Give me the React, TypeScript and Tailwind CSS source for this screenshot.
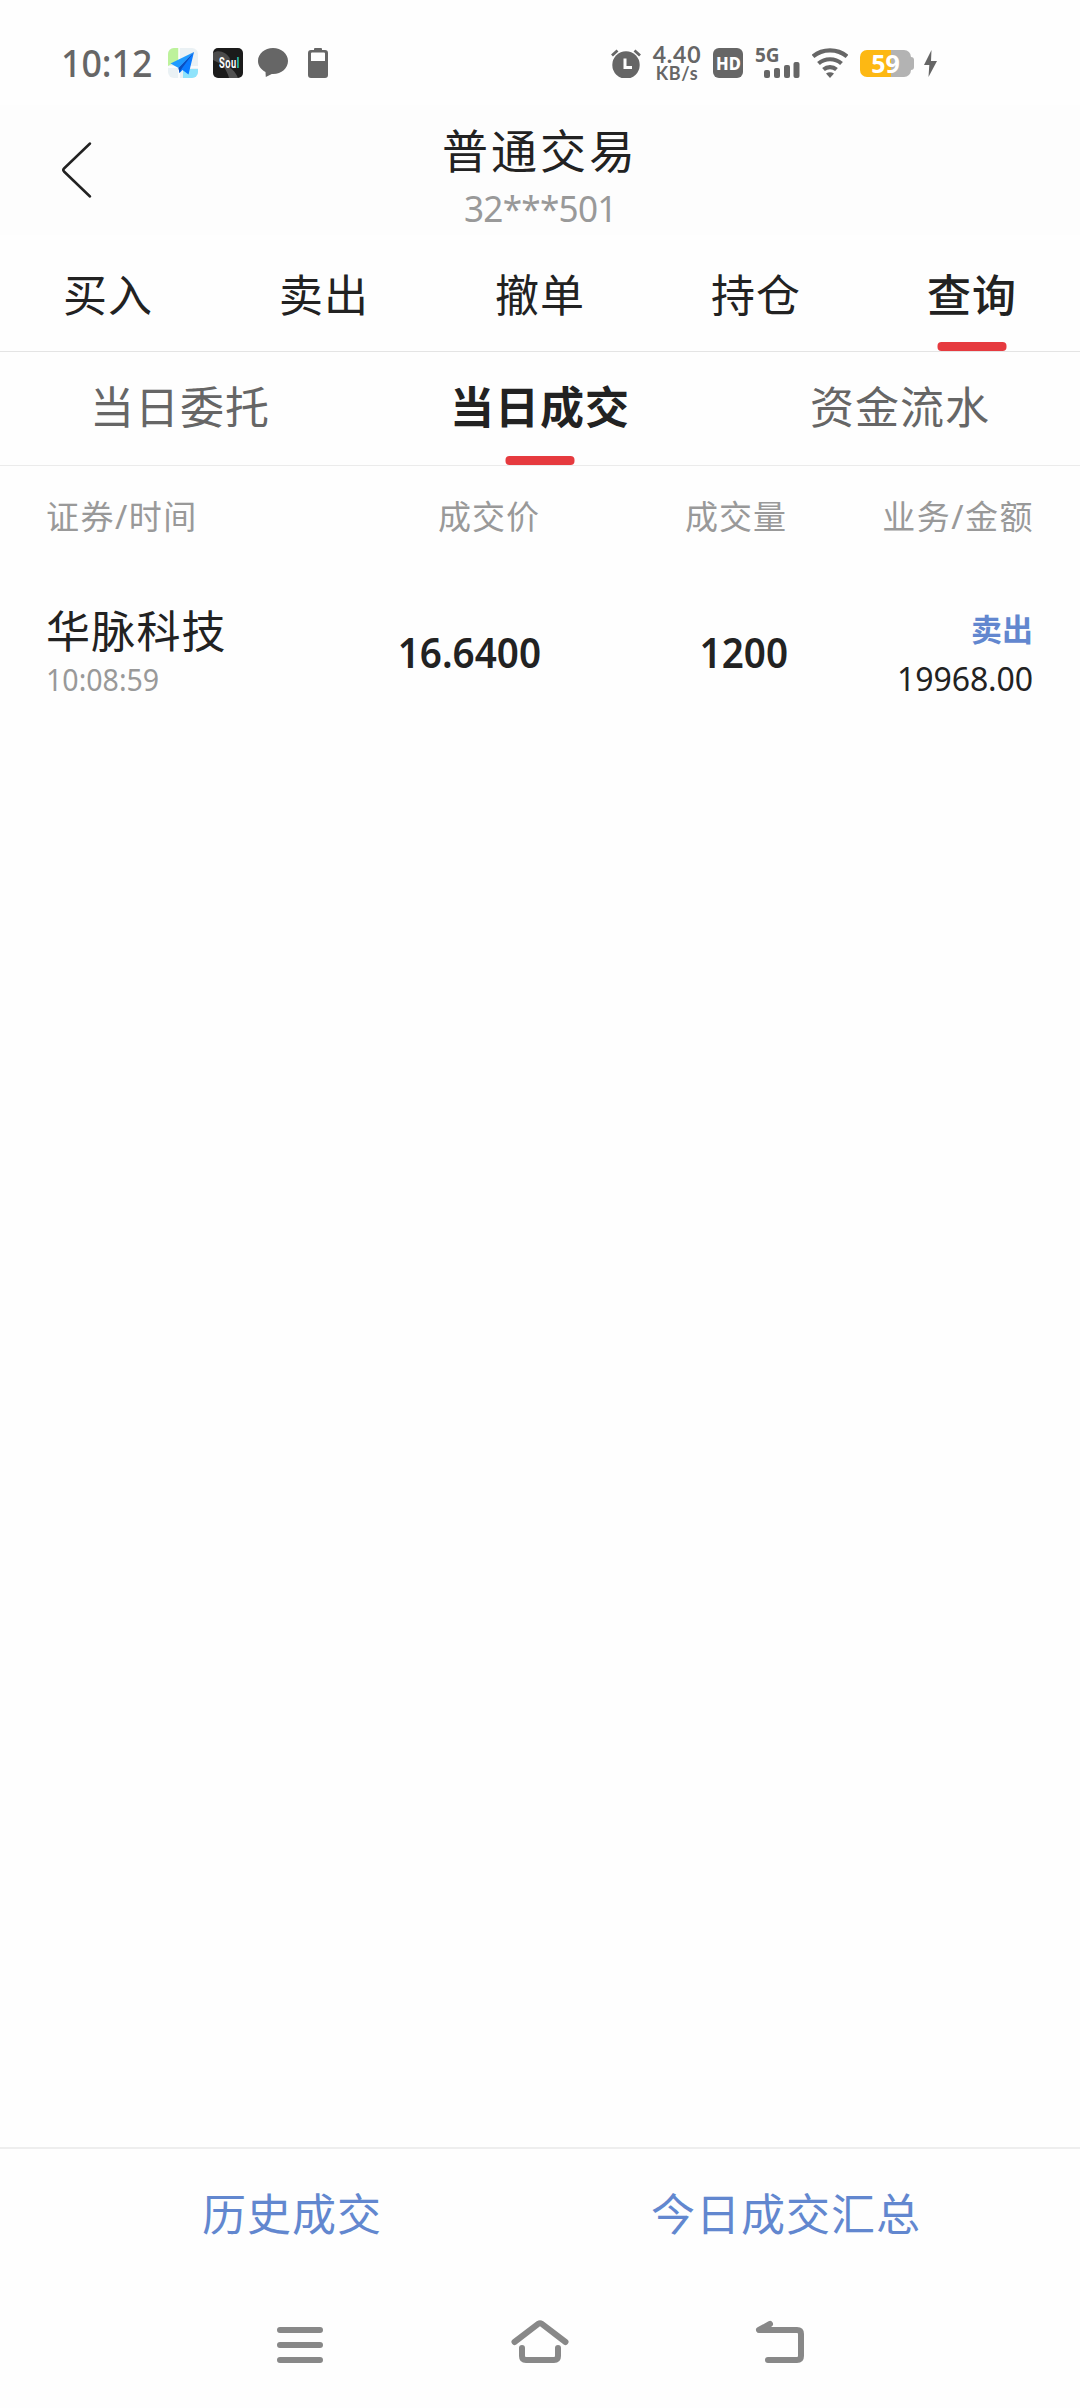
import React from 'react';

interface TabItem {
  label: string;
  active?: boolean;
  className?: string;
}

interface Trade {
  name: string;
  time: string;
  price: string;
  volume: string;
  side: string;
  amount: string;
}

const mainTabs: TabItem[] = [
  { label: '买入' },
  { label: '卖出' },
  { label: '撤单' },
  { label: '持仓' },
  { label: '查询', active: true },
];

const subTabs: TabItem[] = [
  { label: '当日委托' },
  { label: '当日成交', active: true },
  { label: '资金流水' },
];

const trades: Trade[] = [
  {
    name: '华脉科技',
    time: '10:08:59',
    price: '16.6400',
    volume: '1200',
    side: '卖出',
    amount: '19968.00',
  },
];

const MapAppIcon: React.FC = () => (
  <svg className="h-[30px] w-[30px]" viewBox="0 0 30 30">
    <defs>
      <clipPath id="map-clip">
        <rect width="30" height="30" rx="6" />
      </clipPath>
    </defs>
    <g clipPath="url(#map-clip)">
      <rect width="30" height="30" fill="#eaf1f4" />
      <path d="M0 0h11v12L0 18z" fill="#bdf29b" />
      <path d="M15 21h15v9H15z" fill="#8fe3fb" />
      <path d="M11 0v30M0 19h30" stroke="#fff" strokeWidth="1.5" />
    </g>
    <path d="M26 4L2.500 15.500l8 4.500z" fill="#1e9bff" />
    <path d="M26 4L10.500 20l1 5 3-3 6 4.500z" fill="#0a7bff" />
    <path d="M26 4L10.500 20l1 5 2-4z" fill="#0a4fc0" />
  </svg>
);

const SoulAppIcon: React.FC = () => (
  <div className="relative h-[30px] w-[30px] overflow-hidden rounded-[5px] bg-[#1b1b1b]">
    <svg className="h-[30px] w-[30px]" viewBox="0 0 30 30">
      <path d="M0 5c5-4 14-1 17 6l-5 7L0 12z" fill="#4b4b4b" />
      <path d="M11 19c6-1 11 4 14 11H16c-1-4-3-8-5-11z" fill="#505050" />
    </svg>
    <span className="absolute left-[5.500px] top-[7px] origin-left scale-x-[0.62] font-['Roboto',sans-serif] text-[15px] leading-4 font-bold tracking-[0.8px] text-white">
      Sou<span className="text-[#2fd6c4]">l</span>
    </span>
  </div>
);

const StatusBar: React.FC = () => (
  <div className="flex h-[105px] items-start pt-[45px] pl-[61px] text-[#666]">
    <div className="flex h-9 w-[107px] items-center text-[38px] leading-9 font-medium">
      <span className="mt-[-2px] origin-left scale-x-[0.940]">10:12</span>
    </div>
    <div className="flex h-9 items-center gap-[15px]">
      <MapAppIcon />
      <SoulAppIcon />
      <svg className="h-[30px] w-[30px]" viewBox="0 0 30 30" fill="#666">
        <path d="M15 0C6.700 0 0 5.700 0 13c0 4.500 2.700 8.500 7.500 11l.3 5 6-3.100c9 .7 16.200-5.400 16.200-12.900C30 5.700 23.300 0 15 0z" />
      </svg>
      <svg className="ml-[5px] h-[30px] w-5" viewBox="0 0 20 30" fill="#666">
        <path
          fillRule="evenodd"
          d="M6 2V1q0-1 1-1h6q1 0 1 1v1h3q3 0 3 3v22q0 3-3 3H3q-3 0-3-3V5q0-3 3-3zM4 4.500q-1 0-1 1v7.500h14V5.500q0-1-1-1z"
        />
      </svg>
    </div>

    <div className="ml-[283px] flex h-9 items-center">
      <svg className="h-[30px] w-[30px]" viewBox="0 0 30 30">
        <circle cx="15" cy="17" r="13.700" fill="#666" />
        <path d="M1 7.500L6.500 2.500M29 7.500L23.500 2.500" stroke="#666" strokeWidth="2.800" />
        <path d="M14 10.500v9h7" fill="none" stroke="#fff" strokeWidth="3" />
      </svg>
      <div className="mt-[-1px] ml-3 flex w-[48px] flex-col items-center font-['Lato',sans-serif] font-bold">
        <span className="text-[23px] leading-[20px] tracking-[0.8px]">4.40</span>
        <span className="text-[18px] leading-[18px] tracking-[0.7px]">KB/s</span>
      </div>
      <div className="ml-3 flex h-[30px] w-[30px] items-center justify-center rounded-[6px] bg-[#666]">
        <span className="scale-x-[0.920] text-[18px] leading-none font-extrabold text-white">HD</span>
      </div>
      <div className="relative ml-3 h-[30px] w-[45px]">
        <span className="absolute -top-[2px] left-0 origin-left text-[19px] leading-[18px] font-bold">5G</span>
        <svg className="h-[30px] w-[45px]" viewBox="0 0 45 30" fill="#666">
          <rect x="9" y="22" width="6" height="8" rx="2" />
          <rect x="19" y="20" width="6" height="10" rx="2" />
          <rect x="29" y="17" width="6" height="13" rx="2" />
          <rect x="38.500" y="14" width="6" height="16" rx="2" />
        </svg>
      </div>
      <svg className="ml-3 h-[30px] w-9" viewBox="0 0 36 30" fill="none" stroke="#666" strokeWidth="4.200">
        <path d="M1 8.500C10.500.4 25.500.4 35 8.500" />
        <path d="M6.500 15.500C13 9.800 23 9.800 29.500 15.500" />
        <path d="M11.500 21.500c3.800-3.200 9.200-3.200 13 0" />
        <path d="M18 30l-4-4.500q4-2.500 8 0z" fill="#666" stroke="none" />
      </svg>
      <div className="ml-3 flex items-center">
        <div className="flex h-[27px] w-[51px] items-center justify-center rounded-[7px] bg-[linear-gradient(90deg,#fdb813_60%,#b3b3b3_60%)]">
          <span className="text-[25px] leading-none font-bold text-white">59</span>
        </div>
        <div className="h-[13px] w-[3px] rounded-r-[3px] bg-[#b3b3b3]" />
      </div>
      <svg className="ml-[9px] h-[27px] w-[15px]" viewBox="0 0 15 27" fill="#666">
        <path d="M8.500 0L1 15h5.300L5.500 27 14 11H8z" />
      </svg>
    </div>
  </div>
);

const Header: React.FC = () => (
  <div className="flex h-[130px] items-center bg-[#fdfdfd]">
    <div className="flex w-[240px] pl-[60px]">
      <svg className="h-[58px] w-8" viewBox="0 0 32 58" fill="none" stroke="#222" strokeWidth="2.500" strokeLinecap="round" strokeLinejoin="round">
        <path d="M30 2.500L4 27.500q-1.500 1.500 0 3L30 55.500" />
      </svg>
    </div>
    <div className="flex flex-1 flex-col items-center pt-[12px]">
      <h1 className="text-[46px] leading-[60px] tracking-[3px] text-[#222]">普通交易</h1>
      <p className="mt-[3px] scale-x-[0.950] text-[37px] leading-[50px] tracking-[-0.800px] text-[#999]">32***501</p>
    </div>
    <div className="w-[240px]" />
  </div>
);

const Tab: React.FC<TabItem> = ({ label, active, className }) => (
  <div className="relative flex flex-1 items-center justify-center">
    <span className={`text-[44px] leading-[60px] tracking-[1px] ${className}`}>{label}</span>
    {active && (
      <span className="absolute bottom-0 left-1/2 h-[9px] w-[69px] -translate-x-1/2 rounded-[4px] bg-[#e63a3f]" />
    )}
  </div>
);

const TradeRow: React.FC<{ trade: Trade }> = ({ trade }) => (
  <div className="flex items-center px-[46px] pt-[35px] text-[#222]">
    <div className="w-[250px] pt-[2px]">
      <p className="text-[44px] leading-[54px] tracking-[1.200px]">{trade.name}</p>
      <p className="origin-left scale-x-[0.920] text-[31px] leading-[43px] text-[#999]">{trade.time}</p>
    </div>
    <p className="w-[245px] origin-right scale-x-[0.920] text-right text-[42px] leading-[60px] font-semibold">
      {trade.price}
    </p>
    <p className="w-[247px] origin-right scale-x-[0.920] text-right text-[42px] leading-[60px] font-semibold">
      {trade.volume}
    </p>
    <div className="mr-px flex-1 text-right">
      <p className="text-[31px] leading-[54px] font-bold text-[#6287cf]">{trade.side}</p>
      <p className="pt-px text-[32px] leading-[44px] tracking-[-0.100px]">{trade.amount}</p>
    </div>
  </div>
);

const NavBar: React.FC = () => (
  <div className="flex h-[128px] items-start justify-center gap-[180px] pt-[35px]">
    <svg className="h-[60px] w-[60px]" viewBox="0 0 60 60" stroke="#888" strokeWidth="6" strokeLinecap="round">
      <path d="M10 15h40M10 30h40M10 45h40" />
    </svg>
    <svg className="h-[60px] w-[60px]" viewBox="0 0 60 60" fill="none" stroke="#888" strokeWidth="6" strokeLinecap="round" strokeLinejoin="round">
      <path d="M4.500 27L28.500 8.700q1.500-1 3 0L55.500 27" />
      <path d="M12 33v8q0 4 4 4h28q4 0 4-4v-8" />
    </svg>
    <svg className="h-[60px] w-[60px]" viewBox="0 0 60 60" fill="none" stroke="#888" strokeWidth="6" strokeLinecap="round" strokeLinejoin="round">
      <path d="M20 9L9 15h38q4 0 4 4v22q0 4-4 4H18" />
    </svg>
  </div>
);

export default function App() {
  return (
    <div className="flex h-[2408px] w-[1080px] flex-col bg-[#fefefe] font-['Noto_Sans','Noto_Sans_CJK_SC',sans-serif]">
      <StatusBar />
      <Header />

      <div className="flex h-[117px] border-b border-[#e4e4e4]">
        {mainTabs.map((tab) => (
          <Tab key={tab.label} {...tab} className={tab.active ? 'mt-[3px] font-medium text-[#222]' : 'mt-[3px] text-[#222]'} />
        ))}
      </div>
      <div className="flex h-[114px] border-b border-[#ebebeb]">
        {subTabs.map((tab) => (
          <Tab key={tab.label} {...tab} className={tab.active ? 'mt-[-3px] font-bold text-[#222]' : 'mt-[-3px] text-[#666]'} />
        ))}
      </div>

      <div className="flex h-[101px] items-center px-[46px] text-[33px] leading-[44px] tracking-[1px] text-[#999]">
        <span className="w-[250px] tracking-[1.500px]">证券/时间</span>
        <span className="w-[244px] text-right">成交价</span>
        <span className="w-[247px] text-right">成交量</span>
        <span className="flex-1 text-right tracking-[1.500px]">业务/金额</span>
      </div>
      {trades.map((trade) => (
        <TradeRow key={trade.time} trade={trade} />
      ))}

      <div className="mt-auto flex h-[133px] items-center border-t-2 border-[#eee] pb-px pl-[202px] text-[44px] leading-[60px] tracking-[1px] text-[#6287cf]">
        <button>历史成交</button>
        <button className="ml-[269px]">今日成交汇总</button>
      </div>
      <NavBar />
    </div>
  );
}
